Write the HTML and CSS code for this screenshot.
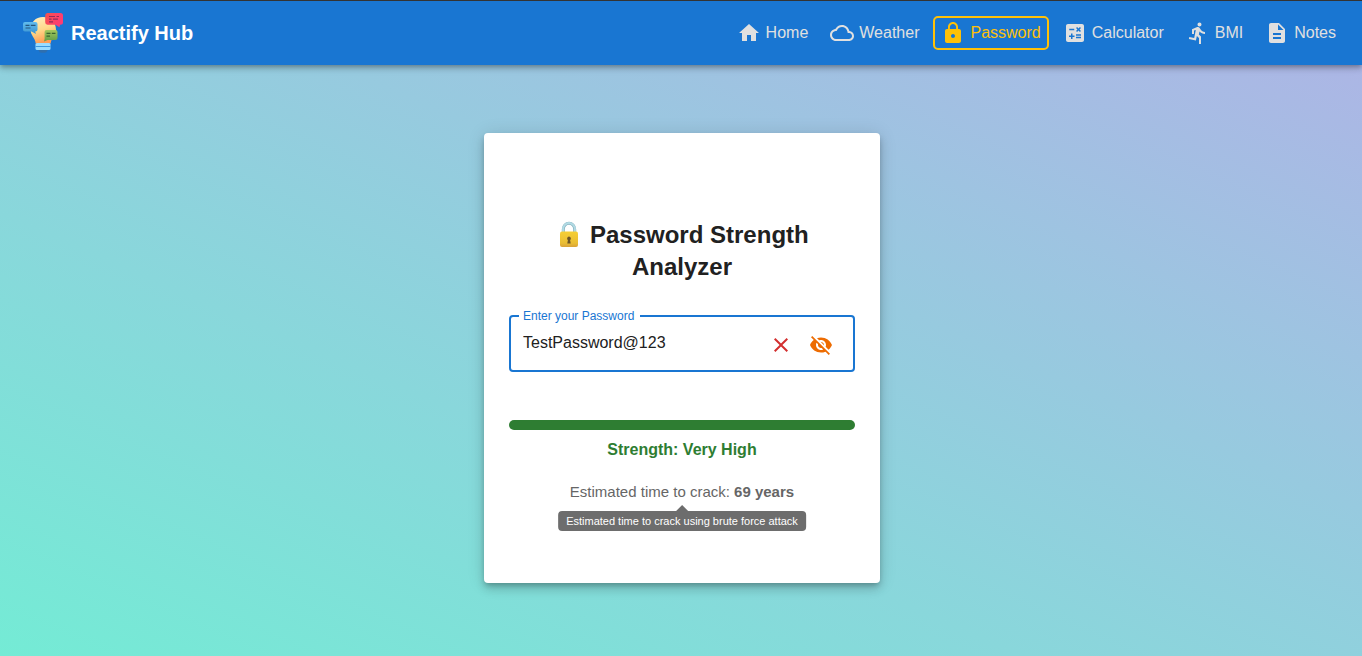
FILE: index.html
```
<!DOCTYPE html>
<html lang="en">
<head>
<meta charset="utf-8">
<meta name="viewport" content="width=device-width, initial-scale=1">
<title>Reactify Hub</title>
<link rel="stylesheet" href="styles.css">
</head>
<body class="page">
<header class="topbar">
  <a class="brand" href="#">
    <svg class="brand-logo" viewBox="0 0 40 40" aria-hidden="true">
      <defs>
        <linearGradient id="bulb" x1="0" y1="0" x2="0.3" y2="1"><stop offset="0" stop-color="#fff0c4"/><stop offset="0.55" stop-color="#ffd98a"/><stop offset="1" stop-color="#ff9d55"/></linearGradient>
        <linearGradient id="red" x1="0" y1="0" x2="1" y2="0.4"><stop offset="0" stop-color="#f4524d"/><stop offset="1" stop-color="#ff3b74"/></linearGradient>
        <linearGradient id="blue" x1="0" y1="0" x2="0" y2="1"><stop offset="0" stop-color="#62bdee"/><stop offset="1" stop-color="#3a93d2"/></linearGradient>
        <linearGradient id="green" x1="0" y1="0" x2="0" y2="1"><stop offset="0" stop-color="#a4c85c"/><stop offset="1" stop-color="#5f9d48"/></linearGradient>
      </defs>
      <path fill="url(#bulb)" d="M20 4C12.500 4 7.500 9.500 7.500 16.500c0 6 4.800 8.500 5.200 14h15c.4-5.500 5.300-8 5.300-14C33 9.500 27.500 4 20 4z"/>
      <path fill="#2f6fae" d="M14.500 36h11l-2.500 3.500c-.5.300-5.500.3-6 0z"/>
      <rect x="12.500" y="30" width="15" height="7" rx="1.500" fill="#9adcff"/>
      <path stroke="#3f97dc" stroke-width="1" d="M12.500 33.500h15"/>
      <path fill="url(#red)" d="M24.500 0h13a2.500 2.500 0 0 1 2.500 2.500v6.800a2.500 2.500 0 0 1-2.500 2.500H37l-.5 2.500-4-2.500h-8a2.400 2.400 0 0 1-2.300-2.500V2.500A2.400 2.400 0 0 1 24.500 0z"/>
      <path fill="none" stroke="#8e2c5b" stroke-width="1.200" d="M26 3.500h6m1.500 0H36M26 6.200h2.500m1.500 0h5M26 8.800h4"/>
      <path fill="url(#blue)" d="M2 9h10.500a2 2 0 0 1 2 2v5.500a2 2 0 0 1-2 2h-.3l.8 2.500-4.500-2.500H2a2 2 0 0 1-2-2V11a2 2 0 0 1 2-2z"/>
      <path fill="none" stroke="#24577f" stroke-width="1.200" d="M2.500 12.300h4m1.300 0h4.700M2.500 15h5"/>
      <path fill="url(#green)" d="M23.500 17h9a2 2 0 0 1 2 2v6a2 2 0 0 1-2 2h-8L21 28.500l.6-2.500V19a2 2 0 0 1 1.900-2z"/>
      <path fill="none" stroke="#3b652e" stroke-width="1.200" d="M23.500 20.300h4m1.300 0h3.700M23.500 23.200h3.500"/>
    </svg>
    <span>Reactify Hub</span>
  </a>
  <nav class="nav" aria-label="Main">
    <a class="nav-link" href="#"><svg class="icon" viewBox="0 0 24 24" aria-hidden="true"><path d="M10 20v-6h4v6h5v-8h3L12 3 2 12h3v8z"/></svg>Home</a>
    <a class="nav-link" href="#"><svg class="icon" viewBox="0 0 24 24" aria-hidden="true"><path d="M19.350 10.040C18.670 6.590 15.640 4 12 4 9.110 4 6.600 5.640 5.350 8.040 2.340 8.360 0 10.910 0 14c0 3.310 2.690 6 6 6h13c2.760 0 5-2.240 5-5 0-2.640-2.050-4.780-4.650-4.960zM19 18H6c-2.210 0-4-1.790-4-4 0-2.050 1.530-3.760 3.560-3.970l1.070-.11.5-.95C8.080 7.140 9.940 6 12 6c2.620 0 4.880 1.860 5.390 4.430l.3 1.500 1.530.11c1.560.1 2.780 1.410 2.780 2.960 0 1.650-1.350 3-3 3z"/></svg>Weather</a>
    <a class="nav-link nav-link-active" href="#" aria-current="page"><svg class="icon" viewBox="0 0 24 24" aria-hidden="true"><path d="M18 8h-1V6c0-2.760-2.240-5-5-5S7 3.240 7 6v2H6c-1.100 0-2 .9-2 2v10c0 1.100.9 2 2 2h12c1.100 0 2-.9 2-2V10c0-1.100-.9-2-2-2zm-6 9c-1.100 0-2-.9-2-2s.9-2 2-2 2 .9 2 2-.9 2-2 2zm3.100-9H8.900V6c0-1.710 1.390-3.100 3.100-3.100 1.710 0 3.100 1.390 3.100 3.100v2z"/></svg>Password</a>
    <a class="nav-link" href="#"><svg class="icon" viewBox="0 0 24 24" aria-hidden="true"><path d="M19 3H5c-1.100 0-2 .9-2 2v14c0 1.100.9 2 2 2h14c1.100 0 2-.9 2-2V5c0-1.100-.9-2-2-2zm-5.970 4.060L14.090 6l1.410 1.410L16.910 6l1.060 1.060-1.410 1.410 1.410 1.410-1.060 1.060-1.410-1.400-1.410 1.410-1.060-1.060 1.410-1.410-1.410-1.420zm-6.780.66h5v1.500h-5v-1.500zM11.500 16h-2v2H8v-2H6v-1.500h2v-2h1.500v2h2V16zm6.500 1.250h-5v-1.500h5v1.500zm0-2.500h-5v-1.500h5v1.500z"/></svg>Calculator</a>
    <a class="nav-link" href="#"><svg class="icon" viewBox="0 0 24 24" aria-hidden="true"><path d="M13.490 5.480c1.100 0 2-.9 2-2s-.9-2-2-2-2 .9-2 2 .9 2 2 2zm-3.600 13.900 1-4.400 2.100 2v6h2v-7.500l-2.100-2 .6-3c1.300 1.500 3.300 2.500 5.500 2.500v-2c-1.900 0-3.500-1-4.300-2.400l-1-1.600c-.4-.6-1-1-1.700-1-.3 0-.5.1-.8.1l-5.200 2.200v4.700h2v-3.400l1.800-.7-1.600 8.100-4.900-1-.4 2 7 1.400z"/></svg>BMI</a>
    <a class="nav-link" href="#"><svg class="icon" viewBox="0 0 24 24" aria-hidden="true"><path d="M14 2H6c-1.100 0-1.990.9-1.990 2L4 20c0 1.100.89 2 1.990 2H18c1.100 0 2-.9 2-2V8l-6-6zm2 16H8v-2h8v2zm0-4H8v-2h8v2zm-3-5V3.500L18.500 9H13z"/></svg>Notes</a>
  </nav>
</header>
<main class="main">
  <section class="card">
    <h1 class="title"><svg class="title-lock" viewBox="0 0 28 28" role="img" aria-label="Locked">
      <defs><linearGradient id="lockBody" x1="0" y1="0" x2="0" y2="1"><stop offset="0" stop-color="#f6cf35"/><stop offset="0.75" stop-color="#e9bd34"/><stop offset="1" stop-color="#d9a238"/></linearGradient></defs>
      <path fill="none" stroke="#84b0bf" stroke-width="3" d="M8.300 14V9.200a5.700 6 0 0 1 11.400 0V14"/>
      <path fill="none" stroke="#b2dbe4" stroke-width="2" d="M8.100 14V9.200a5.900 6.200 0 0 1 11.800 0V14"/>
      <rect x="5" y="11.500" width="18" height="15.500" rx="2" fill="url(#lockBody)"/>
      <path fill="#6b5426" d="M14 16.500a2 2 0 0 0-1.100 3.600L12.300 23.500h3.400l-.6-3.400A2 2 0 0 0 14 16.500z"/>
    </svg> Password Strength Analyzer</h1>
    <fieldset class="field">
      <legend class="field-legend"><label for="password">Enter your Password</label></legend>
      <input class="field-input" id="password" type="text" value="TestPassword@123" autocomplete="off" spellcheck="false">
      <button class="icon-button icon-button-clear" type="button" aria-label="Clear password"><svg class="icon" viewBox="0 0 24 24" aria-hidden="true"><path d="M19 6.410 17.590 5 12 10.590 6.410 5 5 6.410 10.590 12 5 17.590 6.410 19 12 13.410 17.590 19 19 17.590 13.410 12z"/></svg></button>
      <button class="icon-button icon-button-hide" type="button" aria-label="Hide password"><svg class="icon" viewBox="0 0 24 24" aria-hidden="true"><path d="M12 7c2.760 0 5 2.240 5 5 0 .65-.13 1.260-.36 1.830l2.920 2.920c1.510-1.260 2.700-2.890 3.430-4.750-1.730-4.390-6-7.500-11-7.500-1.400 0-2.740.25-3.980.7l2.160 2.160C10.740 7.130 11.350 7 12 7zM2 4.270l2.280 2.280.46.46C3.080 8.300 1.780 10.020 1 12c1.730 4.390 6 7.500 11 7.500 1.550 0 3.030-.3 4.380-.84l.42.42L19.730 22 21 20.730 3.270 3 2 4.270zM7.530 9.800l1.550 1.550c-.05.21-.08.43-.08.65 0 1.660 1.340 3 3 3 .22 0 .44-.03.65-.08l1.550 1.550c-.67.33-1.410.53-2.200.53-2.760 0-5-2.240-5-5 0-.79.2-1.530.53-2.200zm4.310-.78 3.150 3.150.02-.16c0-1.660-1.340-3-3-3l-.17.010z"/></svg></button>
    </fieldset>
    <div class="meter" role="progressbar" aria-label="Password strength" aria-valuenow="100" aria-valuemin="0" aria-valuemax="100"><div class="meter-fill" style="width: 100%"></div></div>
    <p class="strength">Strength: Very High</p>
    <p class="estimate">Estimated time to crack: <strong>69 years</strong>
      <span class="tooltip" role="tooltip">Estimated time to crack using brute force attack</span>
    </p>
  </section>
</main>
</body>
</html>
```
FILE: styles.css
```
* {
  box-sizing: border-box;
}

.page {
  display: flex;
  flex-direction: column;
  min-height: 100vh;
  margin: 0;
  font-family: "Liberation Sans", Arial, sans-serif;
  font-size: 16px;
  line-height: 24px;
  color: #212121;
}

.topbar {
  position: relative;
  z-index: 1;
  display: flex;
  align-items: center;
  justify-content: space-between;
  min-height: 65px;
  padding: 0 18px 0 23px;
  border-top: 1px solid #333;
  background: #1976d2;
  box-shadow: 0 2px 4px -1px rgba(0, 0, 0, 0.2), 0 4px 5px rgba(0, 0, 0, 0.14), 0 1px 10px rgba(0, 0, 0, 0.12);
}

.brand {
  display: flex;
  align-items: center;
  gap: 8px;
  font-size: 20px;
  font-weight: 700;
  color: #fff;
  text-decoration: none;
}

.brand-logo {
  width: 40px;
  height: 40px;
}

.nav {
  display: flex;
  gap: 6px;
}

.nav-link {
  display: flex;
  align-items: center;
  gap: 5px;
  height: 34px;
  padding: 0 6px;
  border: 2px solid transparent;
  border-radius: 5px;
  line-height: 22px;
  color: #e0e0e0;
  text-decoration: none;
}

.nav-link-active {
  border-color: #ffc107;
  color: #ffc107;
}

.icon {
  display: block;
  width: 24px;
  height: 24px;
  fill: currentColor;
}

.main {
  display: flex;
  flex: 1;
  align-items: center;
  justify-content: center;
  padding: 0 0 5px 2px;
  background: linear-gradient(to top right, #74ebd5, #acb6e5);
}

.card {
  width: 100%;
  max-width: 396px;
  padding: 86px 25px 81px;
  border-radius: 4px;
  background: #fff;
  text-align: center;
  box-shadow: 0 3px 5px -1px rgba(0, 0, 0, 0.2), 0 6px 10px rgba(0, 0, 0, 0.14), 0 1px 18px rgba(0, 0, 0, 0.12);
}

.title {
  margin: 0 0 26px;
  font-size: 24px;
  line-height: 32px;
}

.title-lock {
  width: 28px;
  height: 28px;
  vertical-align: -5px;
}

.field {
  display: flex;
  align-items: center;
  min-width: 0;
  margin: 0;
  padding: 0 12px 4px 8px;
  border: 2px solid #1976d2;
  border-radius: 4px;
  text-align: left;
}

.field-legend {
  padding: 0 6px 0 4px;
  font-size: 12px;
  line-height: 14px;
  color: #1976d2;
}

.field-input {
  flex: 1;
  min-width: 0;
  height: 43px;
  padding: 0 4px 3px;
  border: 0;
  outline: 0;
  background: transparent;
  font: inherit;
  color: inherit;
}

.icon-button {
  padding: 8px;
  border: 0;
  background: none;
  cursor: pointer;
}

.icon-button-clear {
  color: #d32f2f;
}

.icon-button-hide {
  color: #ed6c02;
}

.meter {
  height: 10px;
  margin-top: 48px;
  overflow: hidden;
  border-radius: 5px;
  background: #c8e6c9;
}

.meter-fill {
  height: 100%;
  background: #2e7d32;
}

.strength {
  margin: 8px 0 20px;
  font-weight: 700;
  color: #2e7d32;
}

.estimate {
  position: relative;
  margin: 0;
  font-size: 15px;
  line-height: 20px;
  color: #666;
}

.tooltip {
  position: absolute;
  top: 29px;
  left: 50%;
  padding: 0 8px;
  border-radius: 4px;
  background: #6d6d6d;
  font-size: 11px;
  color: #fff;
  white-space: nowrap;
  transform: translateX(-50%);
}

.tooltip::before {
  content: "";
  position: absolute;
  bottom: 100%;
  left: 50%;
  margin-left: -6px;
  border: 6px solid transparent;
  border-top-width: 0;
  border-bottom-color: #6d6d6d;
}
```
